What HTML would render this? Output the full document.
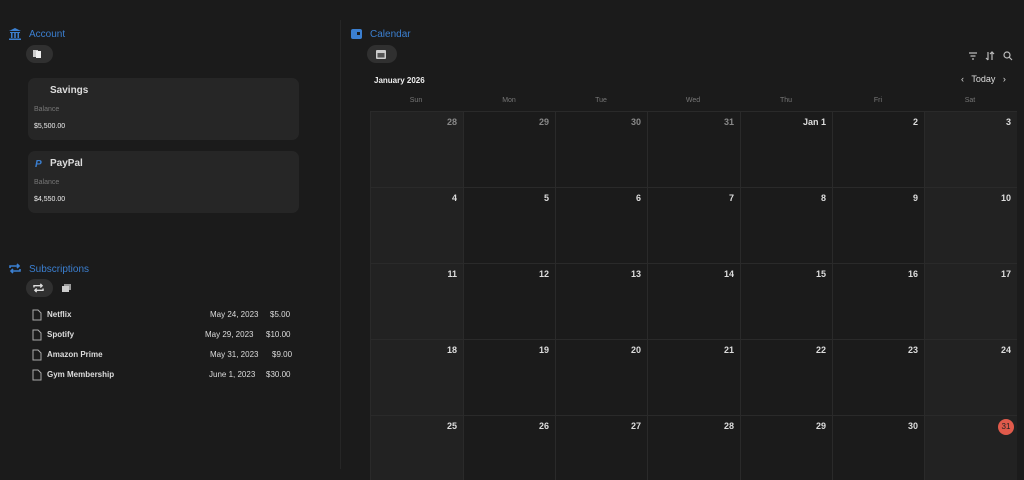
<!DOCTYPE html><html><head><style>
body{margin:0;width:1024px;height:469px;background:#1b1b1b;font-family:"Liberation Sans",sans-serif;color:#ddd;overflow:hidden;position:relative}
.a{position:absolute}
.h{color:#3b7fd0;font-size:10px}
.card{position:absolute;left:28px;width:271px;height:62px;background:#262626;border-radius:7px}
.card .t{position:absolute;left:22px;top:7px;font-size:10px;font-weight:bold;color:#ddd}
.card .b{position:absolute;left:6px;top:28px;font-size:7px;color:#777}
.card .v{position:absolute;left:6px;top:45px;font-size:7px;color:#eee}
.pill{position:absolute;background:#303030;border-radius:10px;height:18px}
.row{position:absolute;left:32px;width:260px;font-size:8px;font-weight:bold;color:#ddd}
.row span{position:absolute}
.cell{position:absolute;border-left:1px solid #2a2a2a;border-top:1px solid #2a2a2a;box-sizing:border-box}
.cell.w{background:#222}
.cell .n{position:absolute;right:6px;top:5px;font-size:9px;font-weight:bold;color:#ddd}
.cell .n.o{color:#888}
.dn{position:absolute;top:97px;font-size:7px;color:#777;width:92px;text-align:center}
</style></head><body>
<div class="a" style="left:340px;top:20px;width:1px;height:449px;background:#262626"></div>
<svg class="a" style="left:9px;top:28px" width="12" height="12" viewBox="0 0 12 12" fill="#3b7fd0"><path d="M6 0L0 3h12zM1 4h10v1H1zM2 5h1.5v5H2zM5.2 5h1.6v5H5.2zM8.5 5H10v5H8.5zM0 10.5h12V12H0z"/></svg>
<div class="a h" style="left:29px;top:29px">Account</div>
<div class="pill" style="left:26px;top:45px;width:27px"></div>
<svg class="a" style="left:33px;top:49px" width="10" height="10"><rect x="0" y="1" width="5" height="7" fill="#ccc"/><rect x="3" y="2" width="5" height="7" fill="#eee"/></svg>
<div class="card" style="top:78px"><div class="t">Savings</div><div class="b">Balance</div><div class="v">$5,500.00</div></div>
<div class="card" style="top:151px"><div class="t">PayPal</div><div class="b">Balance</div><div class="v">$4,550.00</div>
<div style="position:absolute;left:7px;top:8px;font-size:10px;color:#3b7fd0;font-weight:bold;font-style:italic">P</div></div>
<svg class="a" style="left:9px;top:263px" width="12" height="11" viewBox="0 0 12 11" fill="none" stroke="#3b7fd0" stroke-width="1.6"><path d="M1 5V3h9M8 1l2 2-2 2M11 6v2H2M4 10L2 8l2-2"/></svg>
<div class="a h" style="left:29px;top:264px">Subscriptions</div>
<div class="pill" style="left:26px;top:279px;width:27px"></div>
<svg class="a" style="left:33px;top:283px" width="11" height="10" viewBox="0 0 12 11" fill="none" stroke="#ddd" stroke-width="1.5"><path d="M1 5V3h9M8 1l2 2-2 2M11 6v2H2M4 10L2 8l2-2"/></svg>
<svg class="a" style="left:62px;top:284px" width="10" height="9"><rect x="2" y="0" width="7" height="6" fill="#999"/><rect x="0" y="2" width="7" height="6" fill="#ccc"/></svg>
<svg class="a" style="left:32px;top:309px" width="10" height="80" fill="none" stroke="#aaa" stroke-width="1"><path d="M1 1h5l3 3v7H1z"/><path d="M1 21h5l3 3v7H1z"/><path d="M1 41h5l3 3v7H1z"/><path d="M1 61h5l3 3v7H1z"/></svg>
<div class="row" style="top:310px"><span style="left:15px">Netflix</span><span style="left:178px;font-weight:normal">May 24, 2023</span><span style="left:238px;font-weight:normal">$5.00</span></div>
<div class="row" style="top:330px"><span style="left:15px">Spotify</span><span style="left:173px;font-weight:normal">May 29, 2023</span><span style="left:234px;font-weight:normal">$10.00</span></div>
<div class="row" style="top:350px"><span style="left:15px">Amazon Prime</span><span style="left:178px;font-weight:normal">May 31, 2023</span><span style="left:240px;font-weight:normal">$9.00</span></div>
<div class="row" style="top:370px"><span style="left:15px">Gym Membership</span><span style="left:177px;font-weight:normal">June 1, 2023</span><span style="left:234px;font-weight:normal">$30.00</span></div>
<svg class="a" style="left:351px;top:29px" width="11" height="10"><rect width="11" height="10" rx="2" fill="#3b7fd0"/><rect x="6" y="3" width="3" height="3" fill="#1b1b1b"/></svg>
<div class="a h" style="left:370px;top:29px">Calendar</div>
<div class="pill" style="left:367px;top:45px;width:30px"></div>
<svg class="a" style="left:376px;top:50px" width="10" height="9"><rect width="10" height="9" rx="1" fill="#ccc"/><rect x="1.5" y="3" width="7" height="4.5" fill="#555"/></svg>
<svg class="a" style="left:968px;top:51px" width="46" height="10" fill="none" stroke="#bbb" stroke-width="1.2"><path d="M1 2h8M2.5 5h5M4 8h2"/><path d="M20 1v8M18 7l2 2M24 9V1M22 3l2-2 2 2"/><circle cx="39" cy="4" r="3"/><path d="M41 6l3 3"/></svg>
<div class="a" style="left:374px;top:76px;font-size:8px;font-weight:bold;color:#eee">January 2026</div>
<div class="a" style="left:961px;top:74px;font-size:9px;color:#ddd">‹&nbsp;&nbsp; Today &nbsp;&nbsp;›</div>
<div id="g"></div>
<script>
var xs=[370,463,555,647,740,832,924,1017],ys=[111,187,263,339,415,480],names=["Sun","Mon","Tue","Wed","Thu","Fri","Sat"],h="";
for(var c=0;c<7;c++)h+='<div class="dn" style="left:'+xs[c]+'px">'+names[c]+'</div>';
var d=[["28","29","30","31","Jan 1","2","3"]];var n=4;for(var r=1;r<5;r++){var a=[];for(c=0;c<7;c++)a.push(String(n++));d.push(a)}
for(r=0;r<5;r++)for(c=0;c<7;c++){var o=(r==0&&c<4)?" o":"";var t=d[r][c];
var lab=(t=="31"&&r==4)?'<div style="position:absolute;right:3px;top:3px;width:16px;height:16px;border-radius:8px;background:#e05a4b;color:#222;font-size:8px;text-align:center;line-height:16px">31</div>':'<div class="n'+o+'">'+t+'</div>';
h+='<div class="cell'+((c==0||c==6)?' w':'')+'" style="left:'+xs[c]+'px;top:'+ys[r]+'px;width:'+(xs[c+1]-xs[c])+'px;height:'+(ys[r+1]-ys[r])+'px">'+lab+'</div>';}
document.getElementById("g").innerHTML=h;
</script>
</body></html>
